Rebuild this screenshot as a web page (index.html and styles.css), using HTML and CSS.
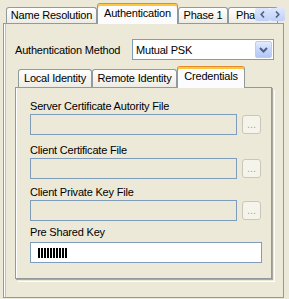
FILE: index.html
```html
<!DOCTYPE html>
<html lang="en">
<head>
    <meta charset="UTF-8">
    <title>Authentication</title>
    <link rel="stylesheet" href="styles.css">
</head>
<body>
    <div class="tabstrip">
        <div class="tab tab-nr">Name Resolution</div>
        <div class="tab tab-auth active">Authentication</div>
        <div class="tab tab-p1">Phase 1</div>
        <div class="tab tab-p2">Phase 2</div>
        <div class="scroller">
            <span class="scroll-btn">
                <svg width="5" height="7" viewBox="0 0 5 7"><path d="M4 0.5 L1.2 3.5 L4 6.5" fill="none" stroke="#4D6185" stroke-width="1.6"/></svg>
            </span>
            <span class="scroll-btn">
                <svg width="5" height="7" viewBox="0 0 5 7"><path d="M1 0.5 L3.8 3.5 L1 6.5" fill="none" stroke="#4D6185" stroke-width="1.6"/></svg>
            </span>
        </div>
    </div>

    <div class="page">
        <div class="method-row">
            <span>Authentication Method</span>
            <div class="combo">
                <span>Mutual PSK</span>
                <span class="combo-btn">
                    <svg width="9" height="6" viewBox="0 0 9 6"><path d="M1 1 L4.5 4.5 L8 1" fill="none" stroke="#4D6185" stroke-width="2"/></svg>
                </span>
            </div>
        </div>

        <div class="subtabs">
            <div class="subtabstrip">
                <div class="subtab tab-local">Local Identity</div>
                <div class="subtab tab-remote">Remote Identity</div>
                <div class="subtab tab-cred active">Credentials</div>
            </div>
            <div class="subpage">
                <div class="field-group">
                    <label>Server Certificate Autority File</label>
                    <div class="field-line">
                        <div class="textbox disabled"></div>
                        <div class="browse">...</div>
                    </div>
                </div>
                <div class="field-group g2">
                    <label>Client Certificate File</label>
                    <div class="field-line">
                        <div class="textbox disabled"></div>
                        <div class="browse">...</div>
                    </div>
                </div>
                <div class="field-group g3">
                    <label>Client Private Key File</label>
                    <div class="field-line">
                        <div class="textbox disabled"></div>
                        <div class="browse">...</div>
                    </div>
                </div>
                <div class="field-group g4">
                    <label>Pre Shared Key</label>
                    <div class="field-line">
                        <div class="textbox psk"><span class="mask"></span></div>
                    </div>
                </div>
            </div>
        </div>
    </div>
</body>
</html>
```

FILE: styles.css
```css
body {
    margin: 0;
    background-color: #ECE9D8;
    font-family: "Liberation Sans", Arial, sans-serif;
    font-size: 11px;
    letter-spacing: -0.2px;
    color: #000;
}

/* outer tab strip */
.tabstrip {
    position: relative;
    z-index: 1;
    display: flex;
    align-items: flex-end;
    height: 24px;
    padding-left: 6px;
    overflow: hidden;
}
.tab {
    box-sizing: border-box;
    flex: none;
    height: 16px;
    margin-bottom: 1px;
    border: 1px solid #919B9C;
    border-bottom: none;
    border-radius: 3px 3px 0 0;
    background: linear-gradient(#fff, #F4F3EE 60%, #ECEBE6);
    text-align: center;
    line-height: 15px;
    white-space: nowrap;
}
.tab.active {
    height: 21px;
    margin-bottom: 0;
    padding-top: 2px;
    border-top-color: #E68B2C;
    background: #FCFCFE;
    box-shadow: inset 0 2px 0 #FFC73C;
}
.tab-nr { width: 91px; }
.tab-auth { width: 81px; }
.tab-p1 { width: 50px; }
.tab-p2 { width: 50px; text-align: left; padding-left: 7px; }

.scroller {
    position: absolute;
    right: 4px;
    top: 8px;
    display: flex;
    width: 30px;
    height: 13px;
}
.scroll-btn {
    display: flex;
    align-items: center;
    justify-content: center;
    flex: 1;
    border-radius: 2px;
    background: linear-gradient(#DDE7FD, #BFD0F9);
}

/* outer page */
.page {
    box-sizing: border-box;
    height: 275px;
    margin: -1px 5px 0 3px;
    border: 1px solid #919B9C;
    box-shadow: inset 1px 0 0 #fff, inset 2px 0 0 #C5C2B2;
}
.method-row {
    display: flex;
    align-items: center;
    padding: 15px 9px 0 11px;
}
.combo {
    box-sizing: border-box;
    display: flex;
    align-items: center;
    width: 142px;
    height: 21px;
    margin-left: auto;
    padding-left: 3px;
    border: 1px solid #7F9DB9;
    background-color: #fff;
}
.combo-btn {
    box-sizing: border-box;
    display: flex;
    align-items: center;
    justify-content: center;
    width: 17px;
    height: 17px;
    margin: 1px 1px 1px auto;
    border: 1px solid #BBCCF5;
    border-radius: 2px;
    background: linear-gradient(#E3EBFE, #C4D4FB 55%, #B4C8F6);
}

/* inner tabs */
.subtabs {
    width: 257px;
    margin: 6px 0 0 11px;
}
.subtabstrip {
    position: relative;
    z-index: 1;
    display: flex;
    align-items: flex-end;
    height: 22px;
    padding-left: 3px;
}
.subtab {
    box-sizing: border-box;
    flex: none;
    height: 18px;
    margin-bottom: 1px;
    border: 1px solid #919B9C;
    border-bottom: none;
    border-radius: 3px 3px 0 0;
    background: linear-gradient(#fff, #F4F3EE 60%, #ECEBE6);
    text-align: center;
    line-height: 17px;
    white-space: nowrap;
}
.subtab.active {
    height: 22px;
    margin-bottom: 0;
    padding-top: 2px;
    line-height: 15px;
    border-top-color: #E68B2C;
    background: #FCFCFE;
    box-shadow: inset 0 2px 0 #FFC73C;
}
.tab-local { width: 74px; }
.tab-remote { width: 85px; }
.tab-cred { width: 68px; }

.subpage {
    box-sizing: border-box;
    height: 192px;
    margin-top: -1px;
    padding: 12px 0 0 14px;
    border: 1px solid #919B9C;
    box-shadow: 1px 1px 0 #ACA899, 2px 2px 0 #ECE9D8, 3px 3px 0 #fff, inset 1px 0 0 #fff;
}

.field-group label {
    display: block;
    line-height: 13px;
    margin-bottom: 1px;
}
.g2 { margin-top: 9px; }
.g3 { margin-top: 7px; }
.g4 { margin-top: 5px; }
.g4 label { margin-bottom: 3px; }

.field-line {
    display: flex;
    align-items: center;
}
.textbox {
    box-sizing: border-box;
    display: flex;
    align-items: center;
    height: 21px;
    border: 1px solid #7F9DB9;
}
.textbox.disabled {
    width: 207px;
    background-color: #ECE9D8;
}
.textbox.psk {
    width: 232px;
    background-color: #fff;
}
.mask {
    display: inline-block;
    width: 29px;
    height: 10px;
    margin-left: 7px;
    background: repeating-linear-gradient(90deg, #000 0 2px, transparent 2px 3px);
}
.browse {
    box-sizing: border-box;
    width: 19px;
    height: 19px;
    margin-left: 5px;
    border: 1px solid #C9C7BA;
    border-radius: 3px;
    background-color: #F5F4EA;
    color: #ACA899;
    text-align: center;
    line-height: 17px;
    letter-spacing: 0;
}
```
